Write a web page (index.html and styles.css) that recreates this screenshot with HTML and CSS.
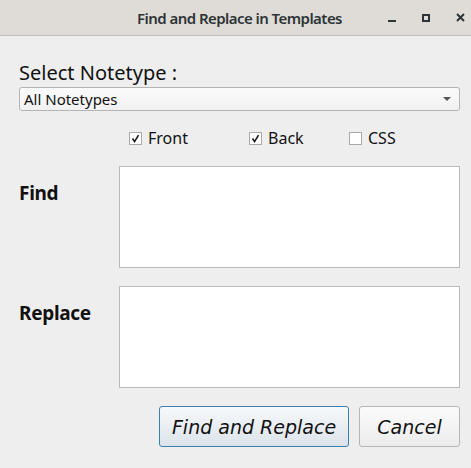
FILE: index.html
```html
<!DOCTYPE html>
<html>
<head>
<meta charset="utf-8">
<link rel="stylesheet" href="styles.css">
</head>
<body>
<div class="window">
  <div class="titlebar">
    <div class="title">Find and Replace in Templates</div>
    <div class="controls">
      <span class="ctl ctl-min"></span>
      <span class="ctl ctl-max"></span>
      <svg class="ctl ctl-close" width="9" height="9" viewBox="0 0 9 9"><path d="M1 1 L8 8 M8 1 L1 8" stroke="#2e3436" stroke-width="2"/></svg>
    </div>
  </div>
  <div class="main">
    <div class="select-label">Select Notetype :</div>
    <div class="combo">
      <span class="combo-text">All Notetypes</span>
      <span class="combo-arrow"></span>
    </div>
    <div class="checks">
      <label class="check check-front">
        <span class="box"><svg width="11" height="11" viewBox="0 0 11 11"><path d="M2.5 5.5 L4.6 8.6 L8.5 2.2" fill="none" stroke="#1a1a1a" stroke-width="1.6"/></svg></span>
        <span class="check-text">Front</span>
      </label>
      <label class="check check-back">
        <span class="box"><svg width="11" height="11" viewBox="0 0 11 11"><path d="M2.5 5.5 L4.6 8.6 L8.5 2.2" fill="none" stroke="#1a1a1a" stroke-width="1.6"/></svg></span>
        <span class="check-text">Back</span>
      </label>
      <label class="check">
        <span class="box"></span>
        <span class="check-text">CSS</span>
      </label>
    </div>
    <div class="field">
      <div class="field-label">Find</div>
      <div class="textbox"></div>
    </div>
    <div class="field">
      <div class="field-label">Replace</div>
      <div class="textbox"></div>
    </div>
    <div class="buttons">
      <button class="btn btn-default">Find and Replace</button>
      <button class="btn">Cancel</button>
    </div>
  </div>
</div>
</body>
</html>
```
FILE: styles.css
```css
html, body {
  margin: 0;
  padding: 0;
  background: #eeeeee;
}
.window {
  width: 471px;
  height: 468px;
  background: #eeeeee;
  font-family: "Noto Sans", "Open Sans", sans-serif;
  color: #111;
}
.titlebar {
  height: 35px;
  background: #dfdcd8;
  border-bottom: 1px solid #c2bfba;
  display: grid;
  grid-template-columns: 1fr auto 1fr;
  align-items: center;
}
.title {
  grid-column: 2;
  font-size: 15px;
  font-weight: 600;
  color: #2e3436;
  padding-left: 8px;
  letter-spacing: -0.55px;
}
.controls {
  grid-column: 3;
  justify-self: end;
  display: flex;
  align-items: center;
  padding-right: 6px;
  height: 35px;
}
.ctl {
  display: block;
}
.ctl-min {
  width: 8px;
  height: 2px;
  background: #2e3436;
  margin-top: 6px;
  margin-right: 26px;
}
.ctl-max {
  width: 4px;
  height: 4px;
  border: 2px solid #2e3436;
  margin-right: 26px;
}
.main {
  padding: 0 11px 0 19px;
}
.select-label {
  font-size: 20px;
  line-height: 22px;
  margin-top: 26px;
  color: #111;
}
.combo {
  margin-top: 3px;
  height: 22px;
  border: 1px solid #b4b4b4;
  border-radius: 3px;
  background: linear-gradient(#fbfbfb, #f1f1f1);
  display: flex;
  align-items: center;
  justify-content: space-between;
  padding: 0 8px 0 4px;
}
.combo-text {
  font-size: 15px;
  line-height: 20px;
}
.combo-arrow {
  width: 0;
  height: 0;
  border-left: 4px solid transparent;
  border-right: 4px solid transparent;
  border-top: 4px solid #555;
}
.checks {
  display: flex;
  margin-top: 17px;
  padding-left: 110px;
  height: 20px;
  align-items: center;
}
.check {
  display: flex;
  align-items: center;
}
.check-front {
  width: 120px;
}
.check-back {
  width: 100px;
}
.box {
  width: 11px;
  height: 11px;
  border: 1px solid #a9a9a9;
  background: #fff;
  display: flex;
}
.check-text {
  font-size: 16px;
  margin-left: 6px;
  line-height: 20px;
}
.field {
  display: grid;
  grid-template-columns: 100px 1fr;
  margin-top: 18px;
}
.field-label {
  font-size: 19px;
  font-weight: 700;
  line-height: 22px;
  padding-top: 16px;
  letter-spacing: -0.3px;
}
.textbox {
  height: 100px;
  background: #fff;
  border: 1px solid #b9b9b9;
}
.buttons {
  display: flex;
  justify-content: flex-end;
  gap: 10px;
  margin-top: 18px;
}
.btn {
  font-family: "DejaVu Sans", sans-serif;
  font-style: italic;
  font-size: 19px;
  height: 41px;
  border-radius: 3px;
  border: 1px solid #b6b6b6;
  background: linear-gradient(#fbfbfb, #ececec);
  color: #111;
  padding: 0;
  width: 101px;
}
.btn-default {
  width: 190px;
  border-color: #3d7eab;
  background: linear-gradient(#f7f9fb, #dbe3ea);
}
```
